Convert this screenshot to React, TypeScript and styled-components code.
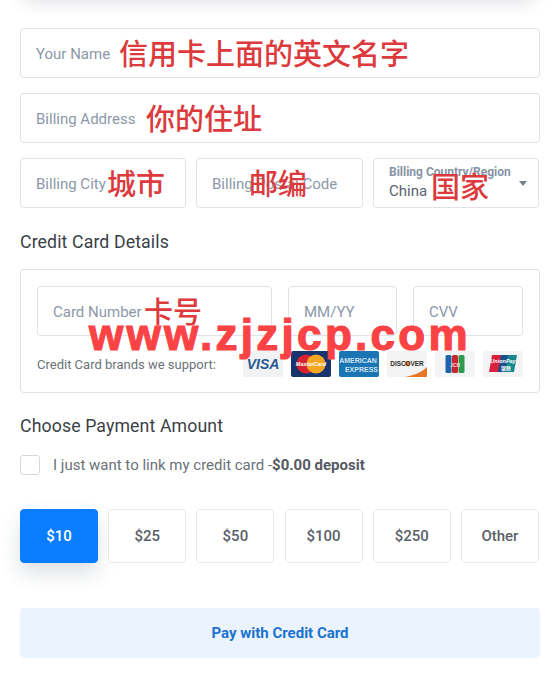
import React from "react";
import styled, { createGlobalStyle } from "styled-components";

const GlobalStyle = createGlobalStyle`
  html, body {
    margin: 0;
    padding: 0;
    background: #fff;
    font-family: Roboto, "Liberation Sans", sans-serif;
  }
  * { box-sizing: border-box; }
`;

const Page = styled.div`
  position: relative;
  width: 558px;
  height: 675px;
  overflow: hidden;
  padding: 28px 18px 0 20px;
`;

const TopShade = styled.div`
  position: absolute;
  top: -14px;
  left: 24px;
  right: 24px;
  height: 14px;
  box-shadow: 0 2px 16px rgba(40, 50, 70, 0.16);
`;

const Form = styled.form`
  display: flex;
  flex-direction: column;
  width: 520px;
`;

const Row = styled.div<{ $mt?: number }>`
  display: flex;
  gap: 10px;
  margin-top: ${p => p.$mt || 0}px;
`;

const Field = styled.div<{ $width?: number }>`
  position: relative;
  flex: ${p => (p.$width ? `0 0 ${p.$width}px` : "1 1 auto")};
  height: 50px;
  display: flex;
  align-items: center;
  padding: 2px 0 0 15px;
  border: 1px solid #dfe2e8;
  border-radius: 4px;
  background: #fff;
  color: #8d98a9;
  font-size: 15px;
  white-space: nowrap;
`;

const Note = styled.span<{ $left: number; $top?: number }>`
  position: absolute;
  left: ${p => p.$left}px;
  top: ${p => p.$top ?? 5}px;
  color: #dc3a3c;
  font-family: "Noto Sans CJK SC", sans-serif;
  font-size: 29px;
  font-weight: 500;
  line-height: 36px;
  white-space: nowrap;
`;

const SelectField = styled(Field)`
  flex-direction: column;
  align-items: flex-start;
  justify-content: flex-start;
  padding-top: 6px;
`;

const SelectLabel = styled.span`
  font-size: 12px;
  line-height: 14px;
  font-weight: 700;
  color: #8793a6;
`;

const SelectValue = styled.span`
  margin-top: 3px;
  font-size: 15px;
  line-height: 18px;
  color: #5b6472;
`;

const Caret = styled.i`
  position: absolute;
  right: 11px;
  top: 22px;
  border: 4px solid transparent;
  border-top: 5px solid #77808f;
  border-bottom: 0;
`;

const Heading = styled.h3<{ $mt: number }>`
  margin: ${p => p.$mt}px 0 0;
  font-size: 17.7px;
  line-height: 22px;
  font-weight: 400;
  letter-spacing: 0.12px;
  color: #3a3f47;
`;

const CardBox = styled.div`
  position: relative;
  height: 124px;
  margin-top: 16px;
  padding: 16px 16px 0 16px;
  border: 1px solid #dfe2e8;
  border-radius: 4px;
`;

const CardRow = styled.div`
  display: flex;
  gap: 16px;
`;

const BrandRow = styled.div`
  display: flex;
  align-items: center;
  justify-content: space-between;
  margin-top: 15px;
`;

const BrandText = styled.span`
  font-size: 13px;
  color: #6b7178;
`;

const Brands = styled.div`
  display: flex;
  gap: 8px;
`;

const Watermark = styled.span`
  position: absolute;
  left: 68px;
  top: 40px;
  color: #fb4346;
  font-family: "Liberation Sans", sans-serif;
  font-weight: 700;
  font-size: 44px;
  line-height: 50px;
  letter-spacing: 3.3px;
  -webkit-text-stroke: 1.2px #fb4346;
  white-space: nowrap;
`;

const CheckRow = styled.label`
  display: flex;
  align-items: center;
  gap: 13px;
  margin-top: 18px;
  font-size: 15px;
  color: #6b7178;
`;

const CheckBox = styled.span`
  width: 20px;
  height: 20px;
  border: 1px solid #d5d8dd;
  border-radius: 3px;
`;

const Strong = styled.b`
  font-weight: 700;
  color: #555a62;
`;

const Amounts = styled.div`
  display: flex;
  justify-content: space-between;
  width: 519px;
  margin-top: 34px;
`;

const Amount = styled.button<{ $active?: boolean }>`
  width: 78px;
  height: 54px;
  padding: 0;
  border: 1px solid ${p => (p.$active ? "#0a7cff" : "#e6e8eb")};
  border-radius: 4px;
  background: ${p => (p.$active ? "#0a7cff" : "#fff")};
  color: ${p => (p.$active ? "#fff" : "#5a6068")};
  box-shadow: ${p => (p.$active ? "0 10px 20px rgba(40, 60, 90, 0.16)" : "none")};
  font-family: Roboto, sans-serif;
  font-size: 15px;
  font-weight: 500;
`;

const PayButton = styled.button`
  height: 50px;
  margin-top: 45px;
  border: 0;
  border-radius: 4px;
  background: #ebf3fe;
  color: #1a73d0;
  font-family: Roboto, sans-serif;
  font-size: 15px;
  font-weight: 700;
`;

const BrandSvg = styled.svg`
  display: block;
  width: 40px;
  height: 26px;
`;

const Visa = () => (
  <BrandSvg viewBox="0 0 40 26">
    <rect width="40" height="26" rx="1.5" fill="#f1f2f3" />
    <text x="20" y="18" textAnchor="middle" fontFamily="Liberation Sans" fontSize="14" fontWeight="700" fontStyle="italic" fill="#27598f">VISA</text>
  </BrandSvg>
);

const MasterCard = () => (
  <BrandSvg viewBox="0 0 40 26">
    <rect width="40" height="26" rx="2" fill="#17346f" />
    <circle cx="15" cy="13" r="9.5" fill="#d8222f" />
    <circle cx="25" cy="13" r="9.5" fill="#f5a623" />
    <text x="20" y="15" textAnchor="middle" fontFamily="Liberation Sans" fontSize="5.5" fontWeight="700" fontStyle="italic" fill="#fff">MasterCard</text>
  </BrandSvg>
);

const Amex = () => (
  <BrandSvg viewBox="0 0 40 26">
    <rect width="40" height="26" rx="2" fill="#1b75b3" />
    <text x="19" y="12" textAnchor="middle" fontFamily="Liberation Sans" fontSize="7" fontWeight="700" fill="#cfe3f2">AMERICAN</text>
    <text x="22.5" y="21" textAnchor="middle" fontFamily="Liberation Sans" fontSize="7" fontWeight="700" fill="#cfe3f2">EXPRESS</text>
  </BrandSvg>
);

const Discover = () => (
  <BrandSvg viewBox="0 0 40 26">
    <rect width="40" height="26" rx="1.5" fill="#f3f3f3" />
    <path d="M40 16v9a1 1 0 0 1-1 1H18c10-2 17-5 22-10z" fill="#e8772a" />
    <circle cx="20.5" cy="12.6" r="2.6" fill="#ee8a2b" />
    <text x="20" y="15" textAnchor="middle" fontFamily="Liberation Sans" fontSize="6.4" fontWeight="700" fill="#2b2b2b">DISCOVER</text>
  </BrandSvg>
);

const Jcb = () => (
  <BrandSvg viewBox="0 0 40 26">
    <rect width="40" height="26" rx="1.5" fill="#f3f4f6" />
    <rect x="10.5" y="4" width="6" height="18" rx="1.5" fill="#1f63a8" />
    <rect x="17" y="4" width="6" height="18" rx="1.5" fill="#c9252d" />
    <rect x="23.5" y="4" width="6" height="18" rx="1.5" fill="#2f9a4c" />
    <text x="20" y="15.5" textAnchor="middle" fontFamily="Liberation Sans" fontSize="5" fontWeight="700" fill="#f2dfe0">JCB</text>
  </BrandSvg>
);

const UnionPay = () => (
  <BrandSvg viewBox="0 0 40 26">
    <rect width="40" height="26" rx="1.5" fill="#f3f3f4" />
    <path d="M9 4h10l-3 17H6z" fill="#d9203f" />
    <path d="M18 4h8l-3 17h-8z" fill="#1a4f8b" />
    <path d="M25 4h9l-3 17h-9z" fill="#16888c" />
    <text x="20" y="12" textAnchor="middle" fontFamily="Liberation Sans" fontSize="5.5" fontStyle="italic" fontWeight="700" fill="#fff">UnionPay</text>
    <text x="23" y="18.5" textAnchor="middle" fontFamily="Noto Sans CJK SC" fontSize="5" fontWeight="700" fill="#fff">银联</text>
  </BrandSvg>
);

const amounts = ["$10", "$25", "$50", "$100", "$250", "Other"];

export default function App() {
  return (
    <Page>
      <GlobalStyle />
      <TopShade />
      <Form>
        <Field>
          Your Name
          <Note $left={98}>信用卡上面的英文名字</Note>
        </Field>
        <Row $mt={15}>
          <Field>
            Billing Address
            <Note $left={125}>你的住址</Note>
          </Field>
        </Row>
        <Row $mt={15}>
          <Field $width={166}>
            Billing City
            <Note $left={86}>城市</Note>
          </Field>
          <Field $width={167}>
            Billing Postal Code
            <Note $left={52}>邮编</Note>
          </Field>
          <SelectField $width={166}>
            <SelectLabel>Billing Country/Region</SelectLabel>
            <SelectValue>China</SelectValue>
            <Caret />
            <Note $left={57} $top={8}>国家</Note>
          </SelectField>
        </Row>

        <Heading $mt={23}>Credit Card Details</Heading>
        <CardBox>
          <CardRow>
            <Field $width={235}>
              Card Number
              <Note $left={106}>卡号</Note>
            </Field>
            <Field $width={109}>MM/YY</Field>
            <Field $width={110}>CVV</Field>
          </CardRow>
          <BrandRow>
            <BrandText>Credit Card brands we support:</BrandText>
            <Brands>
              <Visa />
              <MasterCard />
              <Amex />
              <Discover />
              <Jcb />
              <UnionPay />
            </Brands>
          </BrandRow>
          <Watermark>www.zjzjcp.com</Watermark>
        </CardBox>

        <Heading $mt={22}>Choose Payment Amount</Heading>
        <CheckRow>
          <CheckBox />
          <span>
            I just want to link my credit card -<Strong>$0.00 deposit</Strong>
          </span>
        </CheckRow>
        <Amounts>
          {amounts.map((a, i) => (
            <Amount key={a} type="button" $active={i === 0}>
              {a}
            </Amount>
          ))}
        </Amounts>
        <PayButton type="button">Pay with Credit Card</PayButton>
      </Form>
    </Page>
  );
}
